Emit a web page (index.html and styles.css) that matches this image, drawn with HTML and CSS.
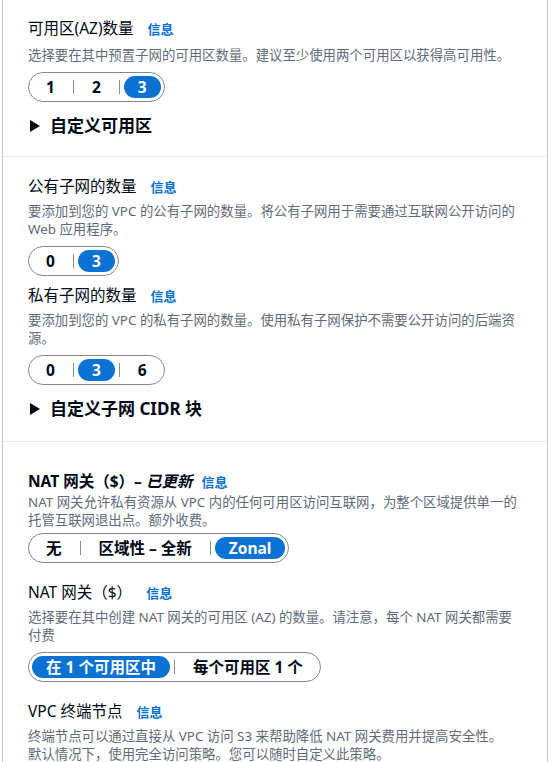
FILE: index.html
```html
<!DOCTYPE html>
<html>
  <head>
    <meta charset="utf-8">
    <title>VPC 设置</title>
    <link rel="stylesheet" href="styles.css">
  </head>
  <body>
    <div class="panel">

      <section class="block first">
        <div class="field">
          <div class="label">可用区(AZ)数量<a class="info">信息</a></div>
          <p class="desc">选择要在其中预置子网的可用区数量。建议至少使用两个可用区以获得高可用性。</p>
          <div class="seg">
            <span class="opt">1</span><i class="sep"></i>
            <span class="opt">2</span><i class="sep"></i>
            <span class="opt on">3</span>
          </div>
        </div>
        <div class="expand"><span class="caret"></span>自定义可用区</div>
      </section>

      <section class="block">
        <div class="field">
          <div class="label">公有子网的数量<a class="info">信息</a></div>
          <p class="desc">要添加到您的 VPC 的公有子网的数量。将公有子网用于需要通过互联网公开访问的<br>Web 应用程序。</p>
          <div class="seg">
            <span class="opt">0</span><i class="sep"></i>
            <span class="opt on">3</span>
          </div>
        </div>
        <div class="field">
          <div class="label">私有子网的数量<a class="info">信息</a></div>
          <p class="desc">要添加到您的 VPC 的私有子网的数量。使用私有子网保护不需要公开访问的后端资<br>源。</p>
          <div class="seg">
            <span class="opt">0</span><i class="sep"></i>
            <span class="opt on">3</span><i class="sep"></i>
            <span class="opt">6</span>
          </div>
        </div>
        <div class="expand"><span class="caret"></span>自定义子网 CIDR 块</div>
      </section>

      <section class="block nat">
        <div class="field tight">
          <div class="label strong">NAT 网关（$）– <em>已更新</em><a class="info near">信息</a></div>
          <p class="desc">NAT 网关允许私有资源从 VPC 内的任何可用区访问互联网，为整个区域提供单一的<br>托管互联网退出点。额外收费。</p>
          <div class="seg">
            <span class="opt">无</span><i class="sep"></i>
            <span class="opt">区域性 – 全新</span><i class="sep"></i>
            <span class="opt on">Zonal</span>
          </div>
        </div>
        <div class="field">
          <div class="label">NAT 网关（$）<a class="info">信息</a></div>
          <p class="desc">选择要在其中创建 NAT 网关的可用区 (AZ) 的数量。请注意，每个 NAT 网关都需要<br>付费</p>
          <div class="seg">
            <span class="opt on">在 1 个可用区中</span><i class="sep"></i>
            <span class="opt">每个可用区 1 个</span>
          </div>
        </div>
        <div class="field">
          <div class="label">VPC 终端节点<a class="info">信息</a></div>
          <p class="desc">终端节点可以通过直接从 VPC 访问 S3 来帮助降低 NAT 网关费用并提高安全性。<br>默认情况下，使用完全访问策略。您可以随时自定义此策略。</p>
        </div>
      </section>

    </div>
  </body>
</html>
```

FILE: styles.css
```css
body {
  margin: 0;
  font-family: "Noto Sans", "Noto Sans CJK SC", sans-serif;
  color: #000716;
  background: #fff;
}

.panel {
  box-sizing: border-box;
  width: 546px;
  margin-left: 2px;
  border-left: 1px solid #c6c6cd;
  border-right: 1px solid #c6c6cd;
}

.block {
  display: flex;
  flex-direction: column;
  gap: 8px;
  padding: 18px 24px 20px 25px;
  border-top: 1px solid #e9ebed;
}

.block.first {
  padding-top: 17px;
  padding-bottom: 18px;
  border-top: none;
}

.block.first .desc {
  margin-top: 6px;
}

.block.nat {
  padding-top: 28px;
  gap: 18px;
}

.label {
  font-size: 15.5px;
  line-height: 22px;
}

.label.strong {
  font-weight: 700;
}

.info {
  margin-left: 14px;
  font-size: 13px;
  font-weight: 700;
  color: #0972d3;
}

.info.near {
  margin-left: 9px;
}

.desc {
  margin: 4px 0 8px;
  font-size: 13.4px;
  line-height: 18px;
  color: #5f6b7a;
  white-space: nowrap;
}

.tight .desc {
  margin-top: 0;
  margin-bottom: 4px;
}

.seg {
  display: inline-flex;
  align-items: center;
  padding: 3px;
  border: 1px solid #7d8998;
  border-radius: 16px;
}

.opt {
  padding: 0 14px;
  height: 22px;
  line-height: 22px;
  border-radius: 12px;
  font-size: 15.5px;
  font-weight: 700;
  white-space: nowrap;
}

.opt.on {
  background-color: #0972d3;
  color: #fff;
}

.sep {
  width: 1px;
  height: 14px;
  margin: 0 4px;
  background-color: #8c8c94;
}

.expand {
  display: flex;
  align-items: center;
  margin-top: 4px;
  font-size: 17px;
  font-weight: 700;
  line-height: 24px;
}

.caret {
  width: 0;
  height: 0;
  margin: 0 10px 0 2px;
  border-left: 10px solid #000716;
  border-top: 6px solid transparent;
  border-bottom: 6px solid transparent;
}
```
